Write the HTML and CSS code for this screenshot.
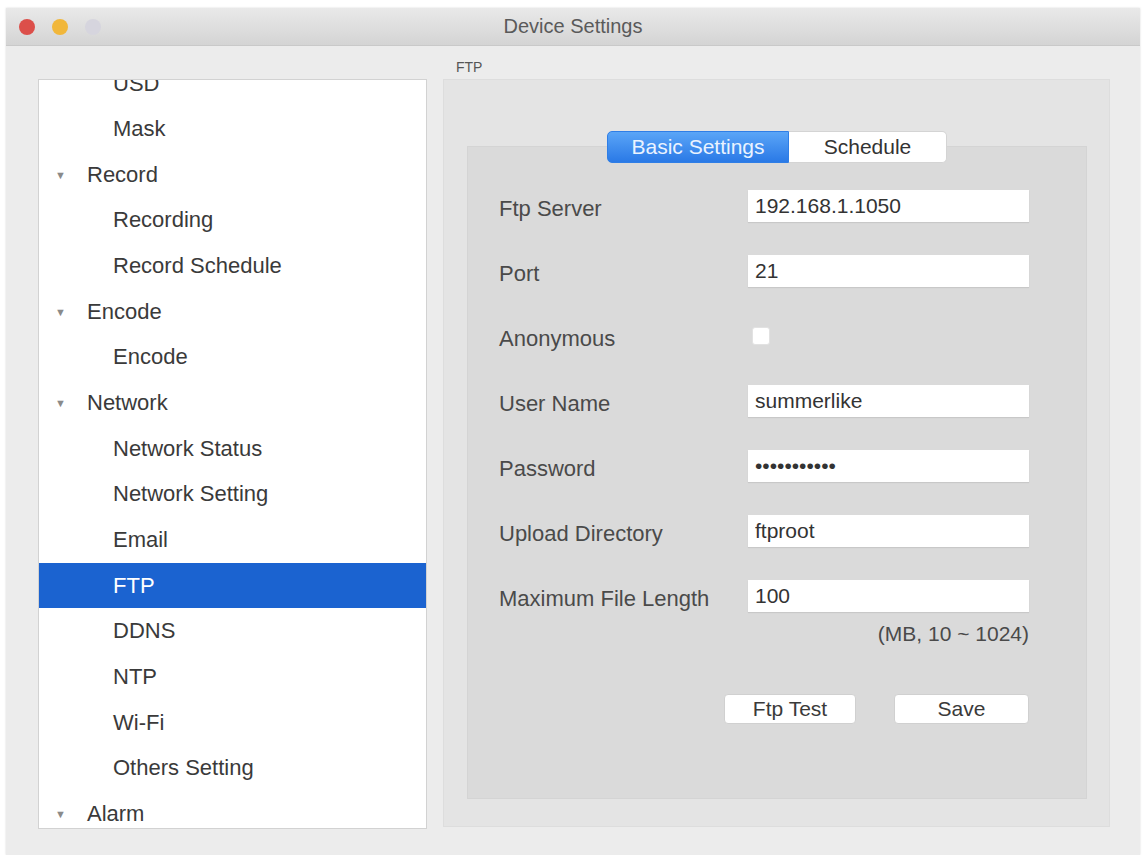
FILE: index.html
```html
<!DOCTYPE html>
<html lang="en">
<head>
    <meta charset="UTF-8">
    <meta name="viewport" content="width=device-width, initial-scale=1.0">
    <title>Device Settings</title>
    <link rel="stylesheet" href="styles.css">
</head>
<body>
    <div class="window">
        <div class="titlebar">
            <div class="lights">
                <span class="light red"></span>
                <span class="light yellow"></span>
                <span class="light green"></span>
            </div>
            <div class="title">Device Settings</div>
            <div></div>
        </div>
        <div class="window-body">
            <aside class="sidebar">
                <ul class="tree">
                    <li class="child">USD</li>
                    <li class="child">Mask</li>
                    <li class="parent">Record</li>
                    <li class="child">Recording</li>
                    <li class="child">Record Schedule</li>
                    <li class="parent">Encode</li>
                    <li class="child">Encode</li>
                    <li class="parent">Network</li>
                    <li class="child">Network Status</li>
                    <li class="child">Network Setting</li>
                    <li class="child">Email</li>
                    <li class="child selected">FTP</li>
                    <li class="child">DDNS</li>
                    <li class="child">NTP</li>
                    <li class="child">Wi-Fi</li>
                    <li class="child">Others Setting</li>
                    <li class="parent">Alarm</li>
                </ul>
            </aside>
            <section class="panel">
                <div class="group-label">FTP</div>
                <div class="group-box">
                    <div class="tabs">
                        <button class="tab active">Basic Settings</button>
                        <button class="tab">Schedule</button>
                    </div>
                    <div class="tab-pane">
                        <div class="form">
                            <label>Ftp Server</label>
                            <input class="field" type="text" value="192.168.1.1050">
                            <label>Port</label>
                            <input class="field" type="text" value="21">
                            <label>Anonymous</label>
                            <div class="check-cell"><input class="check" type="checkbox"></div>
                            <label>User Name</label>
                            <input class="field" type="text" value="summerlike">
                            <label>Password</label>
                            <input class="field" type="password" value="xxxxxxxxxxx">
                            <label>Upload Directory</label>
                            <input class="field" type="text" value="ftproot">
                            <label>Maximum File Length</label>
                            <input class="field" type="text" value="100">
                        </div>
                        <div class="hint">(MB, 10 ~ 1024)</div>
                        <div class="actions">
                            <button class="btn">Ftp Test</button>
                            <button class="btn btn-save">Save</button>
                        </div>
                    </div>
                </div>
            </section>
        </div>
    </div>
</body>
</html>
```
FILE: styles.css
```css
html, body {
    margin: 0;
    padding: 0;
}
body {
    background-color: #ffffff;
    font-family: "Liberation Sans", Arial, sans-serif;
    color: #383838;
}
.window {
    margin: 8px 0 0 6px;
    width: 1134px;
    height: 847px;
    background-color: #ececec;
    display: flex;
    flex-direction: column;
    box-shadow: 0 0 2px rgba(0, 0, 0, 0.15);
}
.titlebar {
    height: 37px;
    flex-shrink: 0;
    display: grid;
    grid-template-columns: 1fr auto 1fr;
    align-items: center;
    background: linear-gradient(#e9e9e9, #d4d4d4);
    border-bottom: 1px solid #c9c9c9;
}
.lights {
    display: flex;
    gap: 17px;
    padding-left: 13px;
}
.light {
    width: 16px;
    height: 16px;
    border-radius: 50%;
}
.red {
    background-color: #dc4f4a;
}
.yellow {
    background-color: #f1b73b;
}
.green {
    background-color: #d6d5de;
}
.title {
    font-size: 20px;
    color: #5a5a5a;
}
.window-body {
    flex: 1;
    display: flex;
    gap: 16px;
    padding: 10px 30px 0 32px;
}
.sidebar {
    width: 389px;
    height: 750px;
    margin-top: 23px;
    box-sizing: border-box;
    background-color: #ffffff;
    border: 1px solid #d2d2d2;
    overflow: hidden;
}
.tree {
    list-style: none;
    margin: -19.5px 0 0 0;
    padding: 0;
}
.tree li {
    height: 45.67px;
    line-height: 45.67px;
    font-size: 22px;
    color: #3a3a3a;
    white-space: nowrap;
}
.tree .child {
    padding-left: 74px;
}
.tree .parent {
    padding-left: 16px;
}
.tree .parent::before {
    content: "\25BC";
    display: inline-block;
    width: 32px;
    font-size: 11px;
    color: #8a8a8a;
    vertical-align: 3px;
}
.tree .selected {
    background-color: #1b63d0;
    color: #ffffff;
}
.panel {
    width: 667px;
    display: flex;
    flex-direction: column;
}
.group-label {
    height: 23px;
    line-height: 23px;
    padding-left: 13px;
    font-size: 14px;
    color: #555555;
}
.group-box {
    height: 748px;
    box-sizing: border-box;
    display: flex;
    flex-direction: column;
    background-color: #e4e4e4;
    border: 1px solid #dddddd;
    padding: 51px 22px 27px 23px;
}
.tabs {
    display: flex;
    justify-content: center;
    position: relative;
    z-index: 1;
    height: 32px;
    margin-bottom: -17px;
}
.tab {
    height: 32px;
    font-family: inherit;
    font-size: 21px;
    padding: 0;
    cursor: pointer;
}
.tab.active {
    width: 182px;
    color: #eaf3ff;
    border: 1px solid #2f7ee6;
    border-radius: 5px 0 0 5px;
    background: linear-gradient(#5aa5f7, #2a79e6);
}
.tab:not(.active) {
    width: 158px;
    color: #333333;
    background-color: #ffffff;
    border: 1px solid #d4d4d4;
    border-left: none;
    border-radius: 0 5px 5px 0;
}
.tab-pane {
    flex: 1;
    background-color: #dadada;
    border: 1px solid #d4d4d4;
    padding: 43px 57px 0 31px;
}
.form {
    display: grid;
    grid-template-columns: 249px 281px;
    grid-auto-rows: 32px;
    row-gap: 33px;
    align-items: center;
}
.form label {
    padding-top: 5px;
    font-size: 22px;
    color: #4a4a4a;
    white-space: nowrap;
}
.field {
    width: 281px;
    height: 32px;
    box-sizing: border-box;
    border: none;
    padding: 0 7px;
    font-family: inherit;
    font-size: 21px;
    color: #333333;
    background-color: #ffffff;
    box-shadow: 0 1px 1px rgba(0, 0, 0, 0.08);
    outline: none;
}
.check-cell {
    display: flex;
    align-items: center;
}
.check {
    appearance: none;
    width: 18px;
    height: 18px;
    margin: 0 0 0 4px;
    background-color: #ffffff;
    border: 1px solid #e2e2e2;
    border-radius: 3px;
}
.hint {
    margin-top: 10px;
    text-align: right;
    font-size: 21px;
    color: #4a4a4a;
}
.actions {
    display: flex;
    justify-content: flex-end;
    gap: 38px;
    margin-top: 48px;
}
.btn {
    width: 132px;
    height: 30px;
    padding: 0;
    font-family: inherit;
    font-size: 21px;
    color: #3a3a3a;
    background-color: #ffffff;
    border: 1px solid #d0d0d0;
    border-radius: 4px;
    cursor: pointer;
}
.btn-save {
    width: 135px;
}
```
